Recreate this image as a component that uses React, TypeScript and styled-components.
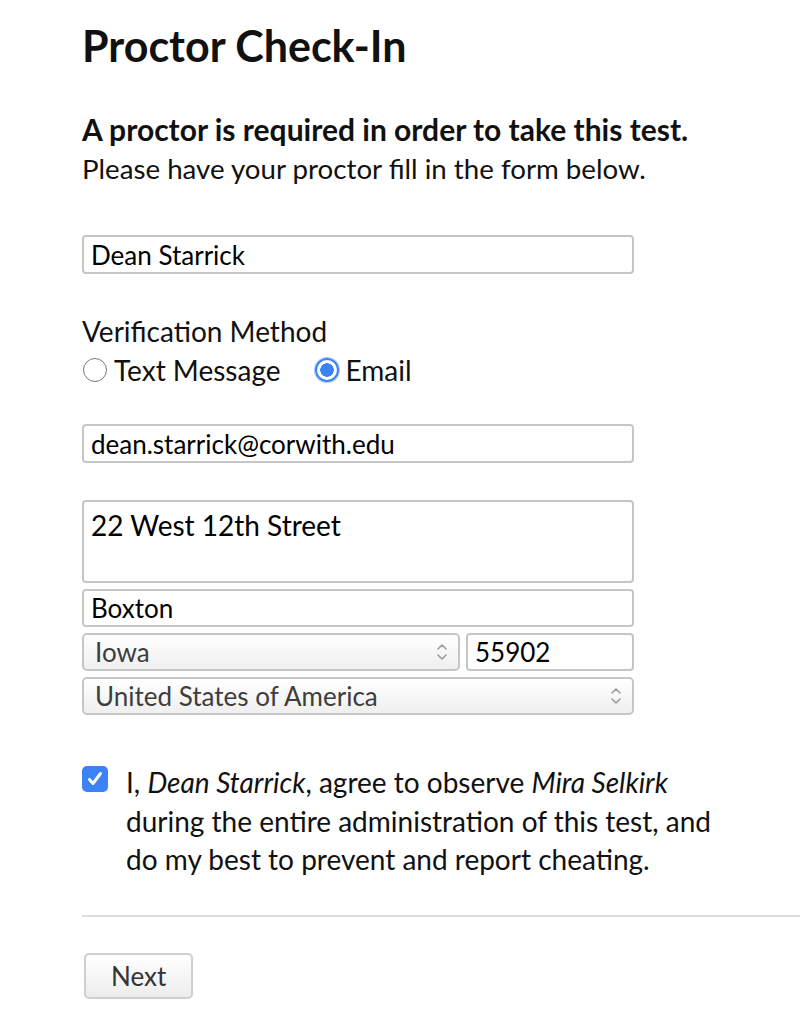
import React, { useState } from 'react';
import styled, { createGlobalStyle } from 'styled-components';

const GlobalStyle = createGlobalStyle`
  html, body {
    margin: 0;
    padding: 0;
    background: #ffffff;
  }
  body {
    font-family: Lato, "Open Sans", "Liberation Sans", sans-serif;
    color: #111;
  }
  * {
    box-sizing: border-box;
  }
`;

const Page = styled.div`
  padding: 21px 0 24px 82px;
  width: 800px;
  overflow: hidden;
`;

const Title = styled.h1`
  margin: 0 0 39px;
  font-size: 43px;
  line-height: 50px;
  font-weight: 700;
  color: #111;
`;

const Lead = styled.p<{ $bold?: boolean }>`
  margin: 0;
  font-size: ${(p) => (p.$bold ? 30 : 27.7)}px;
  line-height: 39px;
  font-weight: ${(p) => (p.$bold ? 700 : 400)};
  color: #111;
`;

const Form = styled.form`
  width: 552px;
  margin-top: 47px;
  display: flex;
  flex-direction: column;
`;

const TextField = styled.input<{ $h?: number }>`
  display: block;
  width: 100%;
  height: ${(p) => p.$h ?? 39}px;
  padding: 0 7px;
  border: 2px solid #c6c6c6;
  border-radius: 4px;
  font-family: inherit;
  font-size: 26px;
  color: #000;
  background: #fff;
  outline: none;
`;

const AddressBox = styled.textarea`
  display: block;
  width: 100%;
  height: 83px;
  padding: 6px 7px;
  border: 2px solid #c6c6c6;
  border-radius: 4px;
  font-family: inherit;
  font-size: 28px;
  line-height: 34px;
  color: #000;
  resize: none;
  outline: none;
`;

const FieldGroup = styled.div<{ $top?: number }>`
  margin-top: ${(p) => p.$top ?? 0}px;
  display: flex;
  flex-direction: column;
  gap: 6px;
`;

const Row = styled.div`
  display: flex;
  gap: 6px;
`;

const SelectWrap = styled.div<{ $width?: string }>`
  position: relative;
  flex: ${(p) => (p.$width ? `0 0 ${p.$width}` : '1 1 auto')};
  height: 38px;
`;

const Select = styled.select`
  appearance: none;
  -webkit-appearance: none;
  width: 100%;
  height: 100%;
  padding: 0 40px 0 11px;
  border: 2px solid #c6c6c6;
  border-radius: 5px;
  background: linear-gradient(#ffffff, #efefef);
  font-family: inherit;
  font-size: 26px;
  color: #3d3d3d;
  outline: none;
`;

const Chevrons = styled.svg`
  position: absolute;
  right: 12px;
  top: 50%;
  transform: translateY(-50%);
  width: 12px;
  height: 22px;
  pointer-events: none;
`;

const Label = styled.div`
  margin-top: 38px;
  font-size: 28px;
  line-height: 39px;
  color: #111;
`;

const RadioRow = styled.div`
  display: flex;
  align-items: center;
  gap: 33px;
  height: 38px;
  margin-bottom: 35px;
`;

const RadioLabel = styled.label`
  display: flex;
  align-items: center;
  gap: 7px;
  font-size: 28px;
  color: #111;
  cursor: pointer;
`;

const Radio = styled.input.attrs({ type: 'radio' })`
  appearance: none;
  -webkit-appearance: none;
  margin: 0 0 0 1px;
  width: 24px;
  height: 24px;
  border-radius: 50%;
  border: 1.5px solid #7a7a7a;
  background: #fff;

  &:checked {
    border: 2px solid #3b82f6;
    background: radial-gradient(circle, #3b82f6 0 6.5px, #ffffff 7px 100%);
    box-shadow: 0 0 0 1px #a9c8fb;
  }
`;

const Agreement = styled.label`
  margin-top: 48px;
  display: flex;
  align-items: flex-start;
  gap: 18px;
  width: 660px;
  cursor: pointer;
`;

const Check = styled.span<{ $on: boolean }>`
  flex: 0 0 26px;
  width: 26px;
  height: 26px;
  margin-top: 3px;
  border-radius: 5px;
  background: ${(p) => (p.$on ? '#3b82f6' : '#fff')};
  border: ${(p) => (p.$on ? 'none' : '1.5px solid #7a7a7a')};
  display: flex;
  align-items: center;
  justify-content: center;

  svg {
    width: 18px;
    height: 18px;
  }
`;

const HiddenBox = styled.input`
  display: none;
`;

const AgreeText = styled.span`
  font-size: 28px;
  line-height: 38.5px;
  color: #111;
  width: 600px;

  em {
    font-style: italic;
  }
`;

const Divider = styled.hr`
  margin: 36px 0 0 0;
  border: none;
  border-top: 2px solid #dddddd;
  width: 740px;
`;

const NextButton = styled.button`
  margin: 36px 0 0 2px;
  height: 46px;
  padding: 0 25px;
  border: 2px solid #cfcfcf;
  border-radius: 5px;
  background: linear-gradient(#ffffff, #ececec);
  font-family: inherit;
  font-size: 26px;
  color: #333;
  cursor: pointer;
`;

const UpDown = () => (
  <Chevrons viewBox="0 0 12 22" fill="none" stroke="#9a9a9a" strokeWidth={1.6} strokeLinecap="round" strokeLinejoin="round">
    <path d="M2 8l4-4 4 4" />
    <path d="M2 14l4 4 4-4" />
  </Chevrons>
);

const App: React.FC = () => {
  const [method, setMethod] = useState<'text' | 'email'>('email');
  const [agreed, setAgreed] = useState(true);

  return (
    <Page>
      <GlobalStyle />
      <Title>Proctor Check-In</Title>
      <Lead $bold>A proctor is required in order to take this test.</Lead>
      <Lead>Please have your proctor fill in the form below.</Lead>

      <Form onSubmit={(e) => e.preventDefault()}>
        <TextField defaultValue="Dean Starrick" />

        <Label>Verification Method</Label>
        <RadioRow>
          <RadioLabel>
            <Radio name="method" checked={method === 'text'} onChange={() => setMethod('text')} />
            Text Message
          </RadioLabel>
          <RadioLabel>
            <Radio name="method" checked={method === 'email'} onChange={() => setMethod('email')} />
            Email
          </RadioLabel>
        </RadioRow>

        <TextField defaultValue="dean.starrick@corwith.edu" />

        <FieldGroup $top={37}>
          <AddressBox defaultValue="22 West 12th Street" />
          <TextField $h={38} defaultValue="Boxton" />
          <Row>
            <SelectWrap>
              <Select defaultValue="Iowa">
                <option>Iowa</option>
                <option>Illinois</option>
                <option>Minnesota</option>
              </Select>
              <UpDown />
            </SelectWrap>
            <SelectWrap $width="168px">
              <TextField $h={38} defaultValue="55902" />
            </SelectWrap>
          </Row>
          <SelectWrap>
            <Select defaultValue="United States of America">
              <option>United States of America</option>
              <option>Canada</option>
            </Select>
            <UpDown />
          </SelectWrap>
        </FieldGroup>
      </Form>

      <Agreement>
        <HiddenBox type="checkbox" checked={agreed} onChange={() => setAgreed(!agreed)} />
        <Check $on={agreed}>
          {agreed && (
            <svg viewBox="0 0 18 18" fill="none" stroke="#fff" strokeWidth={3} strokeLinecap="round" strokeLinejoin="round">
              <path d="M3.5 9.5l3.5 4 7.5-10" />
            </svg>
          )}
        </Check>
        <AgreeText>
          I, <em>Dean Starrick</em>, agree to observe <em>Mira Selkirk</em> during the entire administration of this
          test, and do my best to prevent and report cheating.
        </AgreeText>
      </Agreement>

      <Divider />
      <NextButton type="button">Next</NextButton>
    </Page>
  );
};

export default App;
